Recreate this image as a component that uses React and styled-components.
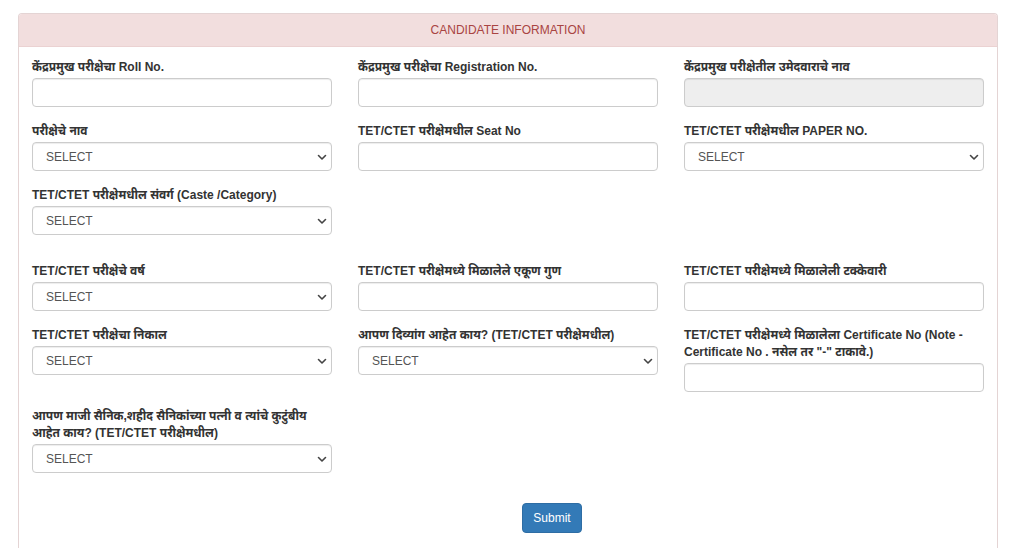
import React from "react";
import styled, { createGlobalStyle } from "styled-components";

const GlobalStyle = createGlobalStyle`
  body {
    margin: 0;
    background: #fff;
    font-family: "Liberation Sans", Arial, "Noto Sans", sans-serif;
    color: #333;
  }
`;

const rows = [
  [
    { label: "केंद्रप्रमुख परीक्षेचा Roll No.", type: "input" },
    { label: "केंद्रप्रमुख परीक्षेचा Registration No.", type: "input" },
    { label: "केंद्रप्रमुख परीक्षेतील उमेदवाराचे नाव", type: "disabled" },
  ],
  [
    { label: "परीक्षेचे नाव", type: "select" },
    { label: "TET/CTET परीक्षेमधील Seat No", type: "input" },
    { label: "TET/CTET परीक्षेमधील PAPER NO.", type: "select" },
  ],
  [{ label: "TET/CTET परीक्षेमधील संवर्ग (Caste /Category)", type: "select" }],
  [
    { label: "TET/CTET परीक्षेचे वर्ष", type: "select" },
    { label: "TET/CTET परीक्षेमध्ये मिळालेले एकूण गुण", type: "input" },
    { label: "TET/CTET परीक्षेमध्ये मिळालेली टक्केवारी", type: "input" },
  ],
  [
    { label: "TET/CTET परीक्षेचा निकाल", type: "select" },
    { label: "आपण दिव्यांग आहेत काय? (TET/CTET परीक्षेमधील)", type: "select" },
    {
      label: [
        "TET/CTET परीक्षेमध्ये मिळालेला Certificate No (Note -",
        'Certificate No . नसेल तर "-" टाकावे.)',
      ],
      type: "input",
    },
  ],
  [
    {
      label: [
        "आपण माजी सैनिक,शहीद सैनिकांच्या पत्नी व त्यांचे कुटुंबीय",
        "आहेत काय? (TET/CTET परीक्षेमधील)",
      ],
      type: "select",
    },
  ],
];

const Chevron = () => (
  <ChevronIcon viewBox="0 0 12 12" width="12" height="12">
    <path
      d="M2.5 4.5 L6 8 L9.5 4.5"
      fill="none"
      stroke="#444"
      strokeWidth="1.6"
      strokeLinecap="round"
      strokeLinejoin="round"
    />
  </ChevronIcon>
);

const Field = ({ field }) => {
  const lines = Array.isArray(field.label) ? field.label : [field.label];
  return (
    <FieldGroup>
      <Label>
        {lines.map((l, i) => (
          <span key={i}>
            {l}
            {i < lines.length - 1 && <br />}
          </span>
        ))}
      </Label>
      {field.type === "select" ? (
        <SelectWrap>
          <Select defaultValue="">
            <option value="">SELECT</option>
          </Select>
          <Chevron />
        </SelectWrap>
      ) : (
        <Input type="text" disabled={field.type === "disabled"} />
      )}
    </FieldGroup>
  );
};

const App = () => {
  return (
    <Page>
      <GlobalStyle />
      <Panel>
        <PanelHeading>CANDIDATE INFORMATION</PanelHeading>
        <PanelBody>
          {rows.map((row, i) => (
            <FormRow key={i} $extra={i === 3}>
              {row.map((field, j) => (
                <Field key={j} field={field} />
              ))}
            </FormRow>
          ))}
          <Actions>
            <SubmitButton type="button">Submit</SubmitButton>
          </Actions>
        </PanelBody>
      </Panel>
    </Page>
  );
};

const Page = styled.div`
  padding: 13px 26px 0 18px;
`;

const Panel = styled.div`
  width: 980px;
  box-sizing: border-box;
  border: 1px solid #e4d4d4;
  border-bottom: none;
  border-radius: 4px 4px 0 0;
  background: #fff;
`;

const PanelHeading = styled.div`
  height: 33px;
  display: flex;
  align-items: center;
  justify-content: center;
  background: #f2dede;
  color: #a94442;
  font-size: 12px;
  padding-bottom: 1px;
  box-sizing: border-box;
  border-bottom: 1px solid #ebd2d2;
  border-radius: 3px 3px 0 0;
`;

const PanelBody = styled.div`
  padding: 12px 12px 16px 13px;
`;

const FormRow = styled.div`
  display: grid;
  grid-template-columns: repeat(3, 300px);
  column-gap: 26px;
  margin-top: ${(p) => (p.$extra ? "12px" : "0")};
`;

const FieldGroup = styled.div`
  display: flex;
  flex-direction: column;
  margin-bottom: 16px;
`;

const Label = styled.label`
  font-size: 12px;
  font-weight: bold;
  line-height: 17px;
  color: #333;
  margin-bottom: 2px;
`;

const controlBase = `
  width: 300px;
  height: 29px;
  box-sizing: border-box;
  border: 1px solid #ccc;
  border-radius: 4px;
  box-shadow: inset 0 1px 1px rgba(0, 0, 0, 0.075);
  font-family: "Liberation Sans", Arial, sans-serif;
  font-size: 12px;
  color: #555;
  background: #fff;
  outline: none;
`;

const Input = styled.input`
  ${controlBase}
  padding: 4px 12px;
  &:disabled {
    background: #eee;
  }
`;

const SelectWrap = styled.div`
  position: relative;
  width: 300px;
`;

const Select = styled.select`
  ${controlBase}
  appearance: none;
  padding: 4px 13px;
`;

const ChevronIcon = styled.svg`
  position: absolute;
  right: 4px;
  top: 9px;
  pointer-events: none;
`;

const Actions = styled.div`
  display: flex;
  justify-content: center;
  padding-left: 87px;
  margin-top: 14px;
`;

const SubmitButton = styled.button`
  width: 60px;
  height: 30px;
  background: #337ab7;
  border: 1px solid #2e6da4;
  border-radius: 4px;
  color: #fff;
  font-family: "Liberation Sans", Arial, sans-serif;
  font-size: 12px;
  cursor: pointer;
`;

export default App;
